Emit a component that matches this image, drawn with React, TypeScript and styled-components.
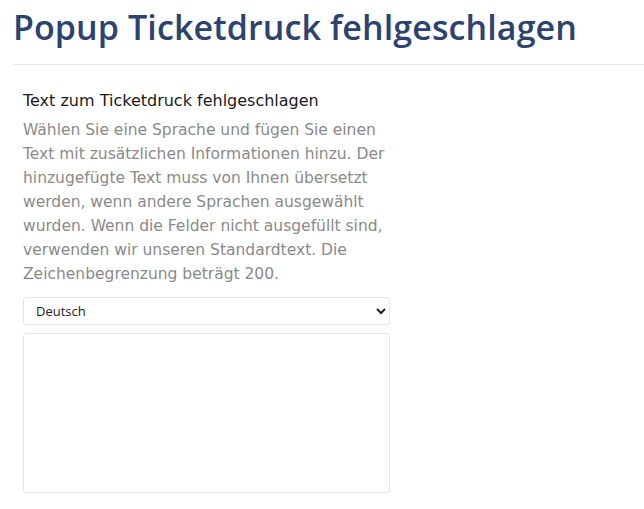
import React from "react";
import styled, { createGlobalStyle } from "styled-components";

const Global = createGlobalStyle`
  html, body { margin: 0; padding: 0; background: #ffffff; }
  body { font-family: "DejaVu Sans", "Open Sans", sans-serif; }
`;

const Page = styled.div`
  padding: 0 0 0 13px;
`;

const Title = styled.h1`
  margin: 0;
  padding: 6px 0 16px;
  font-family: "Open Sans", sans-serif;
  font-weight: 600;
  font-size: 34px;
  letter-spacing: 0.1px;
  line-height: 42px;
  color: #2c4372;
  border-bottom: 1px solid #e6e8ec;
`;

const Section = styled.section`
  padding: 25px 0 0 10px;
  width: 367px;
  display: flex;
  flex-direction: column;
`;

const Label = styled.h2`
  margin: 0 0 6px;
  font-weight: 400;
  font-size: 16px;
  line-height: 22px;
  color: #1a1a1a;
`;

const Description = styled.p`
  margin: 0 0 11px;
  font-size: 15.5px;
  line-height: 24px;
  color: #8a8a8a;
`;

const Select = styled.select`
  height: 28px;
  width: 100%;
  font-family: "Open Sans", sans-serif;
  font-size: 13px;
  color: #222;
  padding: 0 8px;
  border: 1px solid #e4e6ea;
  border-radius: 3px;
  background: #fff;
  margin-bottom: 8px;
`;

const TextArea = styled.textarea`
  height: 160px;
  width: 100%;
  box-sizing: border-box;
  border: 1px solid #e4e6ea;
  border-radius: 3px;
  resize: none;
`;

export default function App() {
  return (
    <>
      <Global />
      <Page>
        <Title>Popup Ticketdruck fehlgeschlagen</Title>
        <Section>
          <Label>Text zum Ticketdruck fehlgeschlagen</Label>
          <Description>
            Wählen Sie eine Sprache und fügen Sie einen Text mit zusätzlichen
            Informationen hinzu. Der hinzugefügte Text muss von Ihnen übersetzt
            werden, wenn andere Sprachen ausgewählt wurden. Wenn die Felder
            nicht ausgefüllt sind, verwenden wir unseren Standardtext. Die
            Zeichenbegrenzung beträgt 200.
          </Description>
          <Select defaultValue="de">
            <option value="de">Deutsch</option>
            <option value="en">English</option>
            <option value="fr">Français</option>
          </Select>
          <TextArea />
        </Section>
      </Page>
    </>
  );
}
